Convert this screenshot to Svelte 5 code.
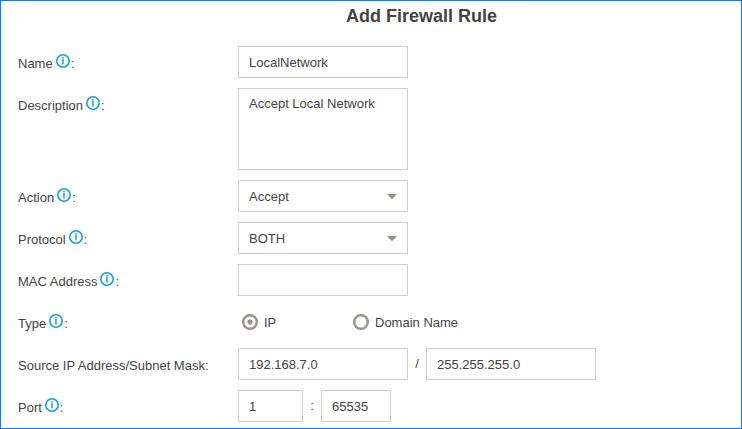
<script>
  let name = $state('LocalNetwork');
  let description = $state('Accept Local Network');
  let mac = $state('');
  let type = $state('ip');
  let address = $state('192.168.7.0');
  let mask = $state('255.255.255.0');
  let portStart = $state('1');
  let portEnd = $state('65535');
</script>

{#snippet label(text, info = true)}
  <div class="label">
    <span>{text}</span>{#if info}<svg class="info" width="14" height="14" viewBox="0 0 14 14" aria-hidden="true">
        <circle cx="7" cy="7" r="6.2" fill="none" stroke="#1ba1d0" stroke-width="1.6" />
        <rect x="6.2" y="3" width="1.5" height="1.5" fill="#1ba1d0" />
        <rect x="6.2" y="5" width="1.5" height="5.5" fill="#1ba1d0" />
      </svg>{/if}<span>:</span>
  </div>
{/snippet}

{#snippet select(value)}
  <button class="field select" type="button">
    <span>{value}</span>
    <svg width="10" height="5" viewBox="0 0 10 5" aria-hidden="true"><path d="M0 0h10L5 5.3z" fill="#999289" /></svg>
  </button>
{/snippet}

<form class="panel">
  <h1>Add Firewall Rule</h1>
  <div class="row">
    {@render label('Name')}
    <input class="field" spellcheck="false" bind:value={name} />
  </div>
  <div class="row">
    {@render label('Description')}
    <textarea class="field" spellcheck="false" bind:value={description}></textarea>
  </div>
  <div class="row">
    {@render label('Action')}
    {@render select('Accept')}
  </div>
  <div class="row">
    {@render label('Protocol')}
    {@render select('BOTH')}
  </div>
  <div class="row">
    {@render label('MAC Address')}
    <input class="field" bind:value={mac} />
  </div>
  <div class="row">
    {@render label('Type')}
    <div class="radios">
      <label class="ip"><input type="radio" value="ip" bind:group={type} /><span>IP</span></label>
      <label><input type="radio" value="domain" bind:group={type} /><span>Domain Name</span></label>
    </div>
  </div>
  <div class="row">
    {@render label('Source IP Address/Subnet Mask', false)}
    <input class="field" bind:value={address} />
    <span class="separator">/</span>
    <input class="field" bind:value={mask} />
  </div>
  <div class="row">
    {@render label('Port')}
    <input class="field start" bind:value={portStart} />
    <span class="separator">:</span>
    <input class="field end" bind:value={portEnd} />
  </div>
</form>

<style>
  .panel {
    box-sizing: border-box;
    width: 742px;
    height: 429px;
    overflow: hidden;
    border: 1px solid #0080ff;
    background: #fff;
    color: #444;
    font: 13px/16px "Liberation Sans", Arial, sans-serif;
    display: flex;
    flex-direction: column;
    gap: 10px;
    padding-left: 17px;
  }
  h1 {
    margin: 0;
    padding: 4px 0 0 328px;
    height: 31px;
    font-size: 18px;
    line-height: 22px;
    font-weight: bold;
    white-space: nowrap;
  }
  .row {
    display: flex;
    flex: none;
    align-items: flex-start;
  }
  .label {
    width: 220px;
    flex: none;
    display: flex;
    padding-top: 10px;
    white-space: nowrap;
  }
  .info {
    flex: none;
    margin: -2px 1px 0 3px;
  }
  .field {
    box-sizing: border-box;
    width: 170px;
    height: 32px;
    margin: 0;
    padding: 0 10px;
    border: 1px solid #d0cec8;
    border-radius: 0;
    background: #fff;
    color: #444;
    font: inherit;
    outline: none;
  }
  textarea.field {
    display: block;
    height: 82px;
    padding-top: 7px;
    resize: none;
    overflow: hidden;
  }
  .select {
    display: flex;
    align-items: center;
    justify-content: space-between;
    text-align: left;
  }
  .select span,
  .radios span {
    padding-top: 2px;
  }
  .radios {
    display: flex;
    height: 32px;
    align-items: center;
    padding-left: 4px;
  }
  .radios label {
    display: flex;
    align-items: center;
  }
  .ip {
    width: 111px;
  }
  .radios input {
    appearance: none;
    box-sizing: border-box;
    width: 16px;
    height: 16px;
    margin: 0 6px 0 0;
    border: 2px solid #999289;
    border-radius: 50%;
    box-shadow: inset 0 0 0 0.5px #999289;
  }
  .radios input:checked {
    background: radial-gradient(circle, #999289 2.3px, transparent 3px);
  }
  .separator {
    width: 18px;
    padding-top: 8px;
    text-align: center;
  }
  .start {
    width: 65px;
  }
  .end {
    width: 70px;
  }
</style>
